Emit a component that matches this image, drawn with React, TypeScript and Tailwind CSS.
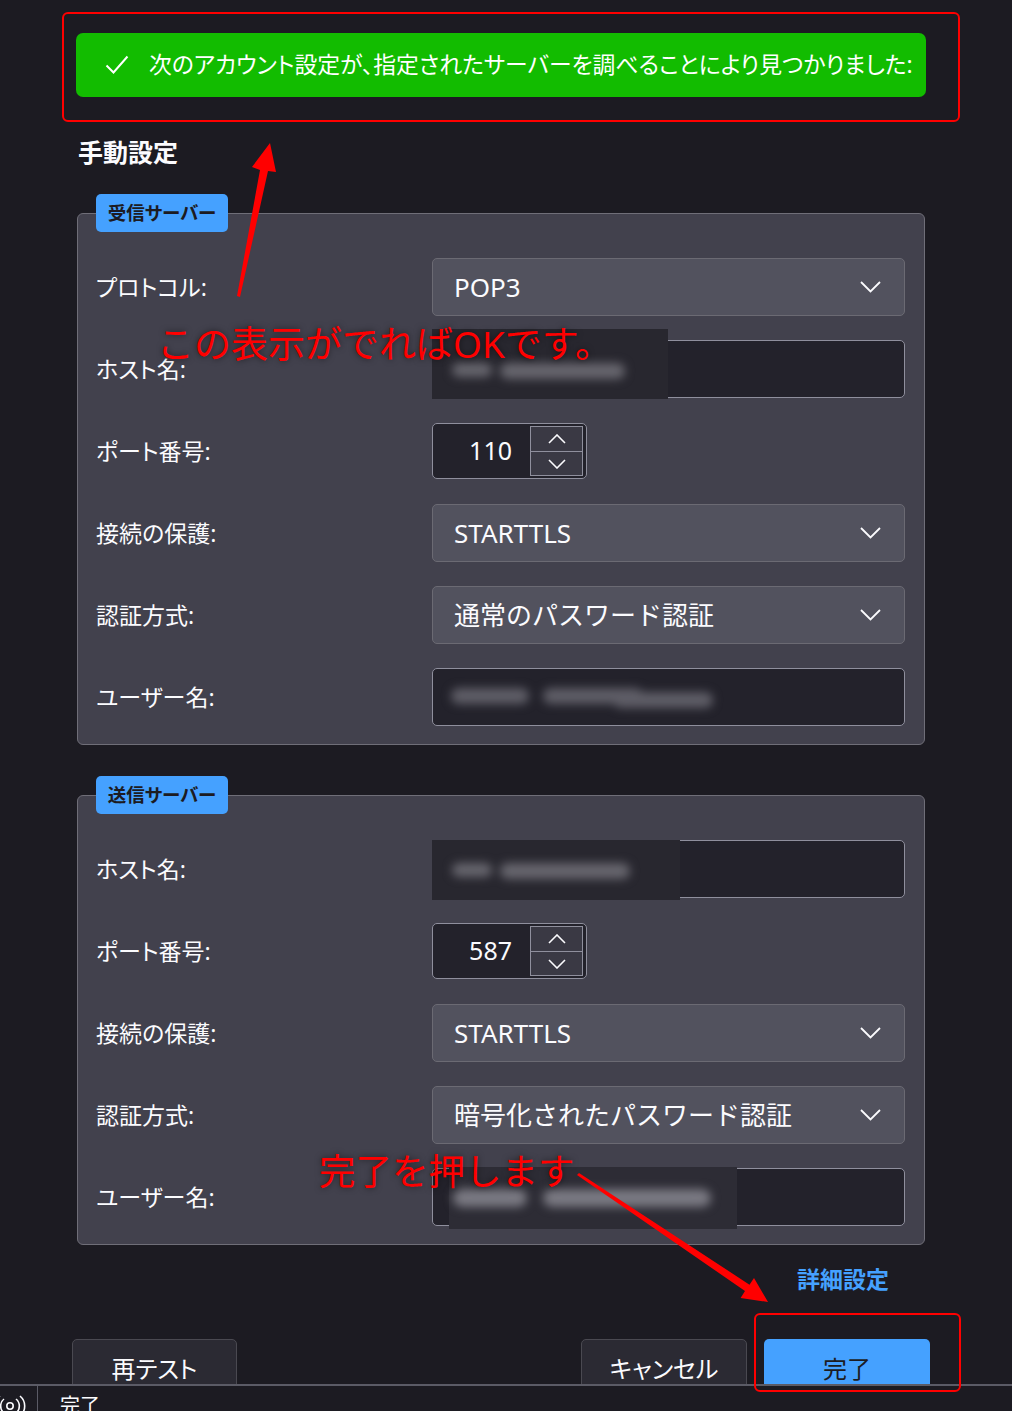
import React from "react";

const Chevron = () => (
  <svg width="21" height="12" viewBox="0 0 21 12" className="shrink-0">
    <path d="M1 1 L10.5 10.5 L20 1" stroke="#fbfbfe" strokeWidth="1.8" fill="none" />
  </svg>
);

function Select({ value }: { value: string }) {
  return (
    <div className="h-[58px] rounded-[5px] border border-[#6b6a73] bg-[#52525e] flex items-center justify-between pl-[21px] pr-[23px] text-[26px] [font-feature-settings:normal] text-[#fbfbfe]">
      <span>{value}</span>
      <Chevron />
    </div>
  );
}

function Spinner({ value }: { value: string }) {
  return (
    <div className="h-[58px] flex items-center">
      <div className="h-[56px] w-[155px] rounded-[5px] border border-[#8f8f9d] bg-[#23222b] flex items-center">
        <div className="w-[97px] text-right pr-[18px] text-[25px] text-[#fbfbfe]">{value}</div>
        <div className="flex flex-col w-[53px] h-[50px] border border-[#8f8f9d]">
          <div className="h-[25px] bg-[#3a3944] border-b border-[#8f8f9d] flex items-center justify-center">
            <svg width="18" height="10" viewBox="0 0 18 10"><path d="M1 9 L9 1 L17 9" stroke="#fbfbfe" strokeWidth="1.6" fill="none" /></svg>
          </div>
          <div className="flex-1 bg-[#3a3944] flex items-center justify-center">
            <svg width="18" height="10" viewBox="0 0 18 10"><path d="M1 1 L9 9 L17 1" stroke="#fbfbfe" strokeWidth="1.6" fill="none" /></svg>
          </div>
        </div>
      </div>
    </div>
  );
}

function Blur({ bars, color }: { bars: { l: number; w: number; t: number; h: number }[]; color: string }) {
  return (
    <div className="absolute inset-0 blur-[5px]">
      {bars.map((b, i) => (
        <span
          key={i}
          className="absolute rounded-full"
          style={{ left: b.l, width: b.w, top: b.t, height: b.h, background: color }}
        />
      ))}
    </div>
  );
}

function Input({ children }: { children?: React.ReactNode }) {
  return <div className="relative h-[58px] rounded-[5px] border border-[#8f8f9d] bg-[#23222b]">{children}</div>;
}

function Row({ label, children }: { label: string; children: React.ReactNode }) {
  return (
    <div className="flex items-center h-[58px] shrink-0">
      <div className="w-[336px] text-[23px] text-[#fbfbfe]">{label}</div>
      <div className="flex-1">{children}</div>
    </div>
  );
}

function Fieldset({ title, children, className }: { title: string; children: React.ReactNode; className: string }) {
  return (
    <div className={"relative shrink-0 w-[848px] rounded-[6px] border border-[#6f6e78] bg-[#42414d] pl-[18px] pr-[19px] pt-[44px] pb-[18px] flex flex-col gap-[24px] " + className}>
      <div className="absolute left-[18px] top-[-20px] h-[38px] w-[132px] rounded-[5px] bg-[#45a1ff] text-[18.5px] font-bold text-[#1c1b22] flex items-center justify-center">
        {title}
      </div>
      {children}
    </div>
  );
}

export default function App() {
  return (
    <div className="relative h-[1411px] w-full overflow-hidden bg-[#1c1b22] font-['Noto_Sans','Noto_Sans_CJK_JP',sans-serif] [font-feature-settings:'palt'] text-[#fbfbfe]">
      <div className="h-[1384px] overflow-hidden flex flex-col">
        {/* annotated success banner */}
        <div className="shrink-0 mt-[12px] ml-[62px] w-[898px] h-[110px] rounded-[6px] border-2 border-[#ff0000] pt-[19px] pl-[12px]">
          <div className="h-[64px] w-[850px] rounded-[7px] bg-[#12bc00] flex items-center pl-[29px] text-[22.8px] text-white">
            <svg width="24" height="20" viewBox="0 0 24 20" className="mr-[20px] shrink-0">
              <path d="M1.5 10.5 L8.5 17.5 L22.5 1.5" stroke="#ffffff" strokeWidth="2" fill="none" />
            </svg>
            <span className="whitespace-nowrap">次のアカウント設定が、指定されたサーバーを調べることにより見つかりました:</span>
          </div>
        </div>

        <div className="shrink-0 mt-[12px] ml-[78px] text-[25px] leading-[36px] font-bold">手動設定</div>

        <Fieldset title="受信サーバー" className="mt-[43px] ml-[77px]">
          <Row label="プロトコル:"><Select value="POP3" /></Row>
          <Row label="ホスト名:">
            <Input>
              <div className="absolute left-[-1px] top-[-12px] w-[236px] h-[70px] bg-[#28272f]">
                <Blur color="#66656d" bars={[{ l: 20, w: 40, t: 34, h: 14 }, { l: 68, w: 125, t: 34, h: 16 }]} />
              </div>
            </Input>
          </Row>
          <Row label="ポート番号:"><Spinner value="110" /></Row>
          <Row label="接続の保護:"><Select value="STARTTLS" /></Row>
          <Row label="認証方式:"><Select value="通常のパスワード認証" /></Row>
          <Row label="ユーザー名:">
            <Input>
              <Blur color="#5e5d66" bars={[{ l: 18, w: 78, t: 19, h: 16 }, { l: 110, w: 100, t: 19, h: 16 }, { l: 180, w: 100, t: 23, h: 16 }]} />
            </Input>
          </Row>
        </Fieldset>

        <Fieldset title="送信サーバー" className="mt-[50px] ml-[77px]">
          <Row label="ホスト名:">
            <Input>
              <div className="absolute left-[-1px] top-[-1px] w-[248px] h-[60px] bg-[#28272f]">
                <Blur color="#66656d" bars={[{ l: 20, w: 40, t: 23, h: 14 }, { l: 68, w: 130, t: 23, h: 16 }]} />
              </div>
            </Input>
          </Row>
          <Row label="ポート番号:"><Spinner value="587" /></Row>
          <Row label="接続の保護:"><Select value="STARTTLS" /></Row>
          <Row label="認証方式:"><Select value="暗号化されたパスワード認証" /></Row>
          <Row label="ユーザー名:">
            <Input>
              <div className="absolute left-[16px] top-[-2px] w-[288px] h-[62px] bg-[#2d2c35]">
                <Blur color="#7a7982" bars={[{ l: 4, w: 74, t: 22, h: 18 }, { l: 94, w: 168, t: 22, h: 18 }]} />
              </div>
            </Input>
          </Row>
        </Fieldset>

        <div className="shrink-0 mt-[17px] ml-[77px] w-[848px] flex justify-end pr-[36px]">
          <span className="text-[23px] leading-[34px] font-bold text-[#45a1ff]">詳細設定</span>
        </div>

        <div className="shrink-0 mt-[43px] pl-[72px] pr-[82px] flex items-start">
          <div className="h-[60px] w-[165px] rounded-[5px] border border-[#4a4951] bg-[#2b2a33] flex items-center justify-center text-[24px]">再テスト</div>
          <div className="flex-1" />
          <div className="h-[60px] w-[166px] rounded-[5px] border border-[#4a4951] bg-[#2b2a33] flex items-center justify-center text-[24px]">キャンセル</div>
          <div className="ml-[17px] h-[60px] w-[166px] rounded-[5px] bg-[#45a1ff] flex items-center justify-center text-[24px] text-[#1c1b22]">完了</div>
        </div>
      </div>

      {/* status bar */}
      <div className="h-[27px] border-t-2 border-[#5b5b66] bg-[#1c1b22] flex items-stretch">
        <div className="w-[37px] relative overflow-hidden">
          <svg width="32" height="26" viewBox="0 0 32 26" className="absolute left-[-6px] top-[5px]">
            <circle cx="16" cy="15" r="3.2" stroke="#fbfbfe" strokeWidth="1.6" fill="none" />
            <path d="M10 8 A9 9 0 0 0 10 22" stroke="#fbfbfe" strokeWidth="1.6" fill="none" />
            <path d="M22 8 A9 9 0 0 1 22 22" stroke="#fbfbfe" strokeWidth="1.6" fill="none" />
            <path d="M6 5 A13 13 0 0 0 6 25" stroke="#fbfbfe" strokeWidth="1.6" fill="none" />
            <path d="M26 5 A13 13 0 0 1 26 25" stroke="#fbfbfe" strokeWidth="1.6" fill="none" />
          </svg>
        </div>
        <div className="w-px bg-[#5b5b66]" />
        <div className="pl-[22px] pt-[8px] text-[20px] leading-[24px]">完了</div>
      </div>

      {/* annotations */}
      <div className="absolute left-[754px] top-[1313px] w-[207px] h-[79px] rounded-[6px] border-2 border-[#ff0000]" />
      <div className="absolute left-[157px] top-[324px] text-[37px] leading-[40px] whitespace-nowrap [font-feature-settings:normal] text-[#ff0000] [text-shadow:0_0_6px_rgba(0,0,0,0.55)]">この表示がでればOKです。</div>
      <div className="absolute left-[319px] top-[1151px] text-[36.5px] leading-[40px] whitespace-nowrap [font-feature-settings:normal] text-[#ff0000] [text-shadow:0_0_6px_rgba(0,0,0,0.55)]">完了を押します</div>
      <svg className="absolute left-0 top-0 pointer-events-none" width="1012" height="1411" viewBox="0 0 1012 1411">
        <polygon points="237,296 260,170 252,167 270,143 276,172 268,171 240,297" fill="#ff0000" />
        <polygon points="577,1175 745,1291 740.6,1298 768,1302 754,1278 749.5,1284.7 579,1173" fill="#ff0000" />
      </svg>
    </div>
  );
}
